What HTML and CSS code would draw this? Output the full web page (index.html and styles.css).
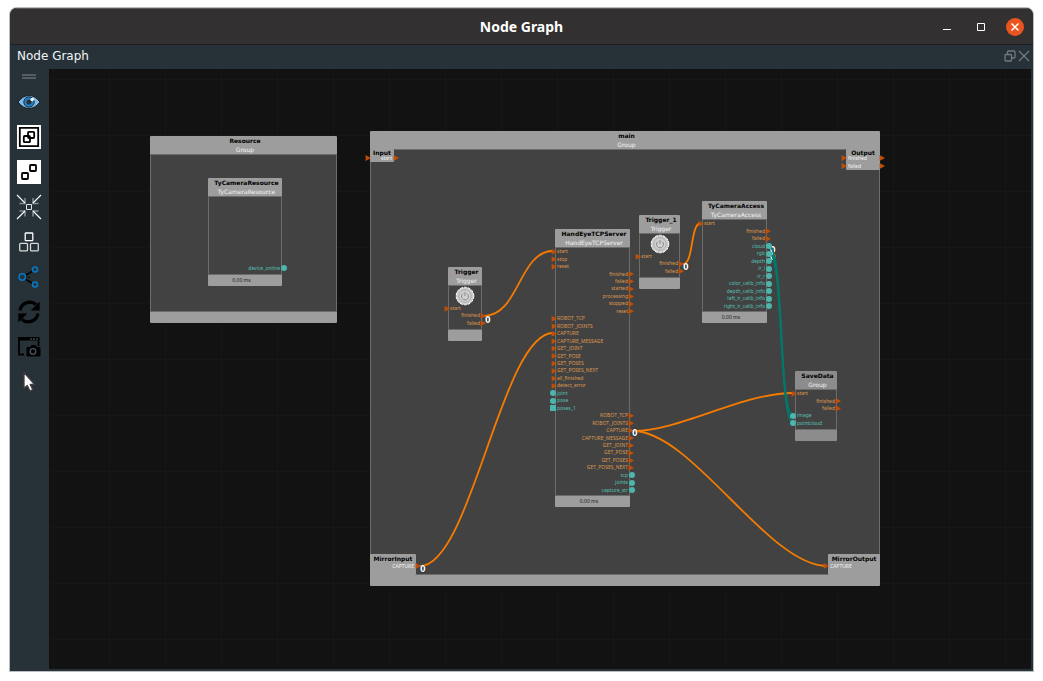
FILE: index.html
```html
<!DOCTYPE html>
<html lang="en">
<head>
<meta charset="utf-8">
<title>Node Graph</title>
<link rel="stylesheet" href="styles.css">
</head>
<body>
<div class="window">
  <header class="titlebar">
    <h1 class="titlebar-text">Node Graph</h1>
    <div class="controls">
      <button class="control" aria-label="Minimize"><svg width="18" height="18" viewBox="0 0 18 18"><path d="M5 11.500h8" stroke="#fff"/></svg></button>
      <button class="control" aria-label="Maximize"><svg width="18" height="18" viewBox="0 0 18 18"><path d="M5.500 5.500h7v7h-7z" fill="none" stroke="#fff"/></svg></button>
      <button class="control close" aria-label="Close"><svg width="18" height="18" viewBox="0 0 18 18"><path d="M5.500 5.500l7 7m0-7l-7 7" stroke="#fff" stroke-width="1.500"/></svg></button>
    </div>
  </header>
  <div class="dockbar">
    <h2 class="dock-title">Node Graph</h2>
    <div class="dock-controls">
      <button class="dock-button" aria-label="Float"><svg width="12" height="12" viewBox="0 0 12 12" fill="none" stroke="#747a7d" stroke-width="1.300"><rect x="3.500" y="1" width="7.500" height="7" rx="1"/><rect x="1" y="4.500" width="6.500" height="6.500" rx="1" fill="#263238"/></svg></button>
      <button class="dock-button" aria-label="Close panel"><svg width="12" height="12" viewBox="0 0 12 12"><path d="M1 1l10 10M11 1L1 11" stroke="#747a7d" stroke-width="1.300"/></svg></button>
    </div>
  </div>
  <div class="workspace">
    <nav class="toolbar" aria-label="Graph tools">
      <div class="handle"></div>
      <button class="tool" aria-label="Show"><svg width="24" height="24" viewBox="0 0 24 24"><path d="M1 12Q6 5.500 12 5.500T23 12Q18 18.500 12 18.500T1 12z" fill="#83b9e4" stroke="#18232a"/><circle cx="12" cy="12" r="5.200" fill="#2382c6" stroke="#14324a"/><circle cx="12" cy="12" r="2.600" fill="#263238"/><circle cx="15.200" cy="9.500" r="1.700" fill="#fff"/></svg></button>
      <button class="tool" aria-label="Group"><svg width="24" height="24" viewBox="0 0 24 24" fill="none" stroke="#000"><path d="M0 0h24v24H0z" fill="#fff" stroke="none"/><path d="M2.800 2.800h18.400v18.400H2.800z" stroke-width="1.800"/><rect x="11" y="6.800" width="6.200" height="6.200" rx="1" stroke-width="1.800"/><rect x="6.800" y="11" width="6.200" height="6.200" rx="1" stroke-width="1.800"/></svg></button>
      <button class="tool" aria-label="Ungroup"><svg width="24" height="24" viewBox="0 0 24 24" fill="none" stroke="#000" stroke-width="1.800"><path d="M0 0h24v24H0z" fill="#fff" stroke="none"/><rect x="13" y="5" width="6" height="6" rx=".8"/><rect x="5" y="13" width="6" height="6" rx=".8"/></svg></button>
      <button class="tool" aria-label="Fit to view"><svg width="24" height="24" viewBox="0 0 24 24" fill="none"><path d="M2.500 8.500h5.500V3M21.500 8.500H16V3M2.500 16H8v5.500M21.500 16H16v5.500" stroke="#849096" stroke-width="1.500"/><path d="M0 0l8 8M24 0l-8 8M0 24l8-8M24 24l-8-8" stroke="#fff" stroke-width="1.100"/><path d="M9.500 9.500h5v5h-5z" stroke="#e3e6e7"/></svg></button>
      <button class="tool" aria-label="Arrange nodes"><svg width="24" height="24" viewBox="0 0 24 24" fill="none" stroke="#d8dbd8" stroke-width="1.300"><rect x="8.200" y="3" width="7.600" height="7.600" rx=".7" stroke="#fff"/><rect x="2.700" y="13.300" width="7.800" height="7.600" rx="1"/><rect x="13.500" y="13.300" width="7.800" height="7.600" rx="1"/></svg></button>
      <button class="tool" aria-label="Connections"><svg width="24" height="24" viewBox="0 0 24 24" fill="none"><path d="M8 10.500l8-4.500M8 14l8 4.500" stroke="#000" stroke-width="1.500"/><path d="M9 12.200h5" stroke="#000" stroke-dasharray="1.500 1"/><g stroke="#0878c8" stroke-width="1.500"><circle cx="5.300" cy="12" r="3.200"/><circle cx="18" cy="4.500" r="2.500"/><circle cx="18" cy="19.500" r="2.500"/></g></svg></button>
      <button class="tool" aria-label="Refresh"><svg width="24" height="24" viewBox="0 0 24 24"><path d="M3 10.500C4.500 1.500 15 .5 19 4.700" fill="none" stroke="#000" stroke-width="3.200"/><path d="M22.700 1.500v9h-9z"/><path d="M21 13.500C19.500 22.500 9 23.500 5 19.300" fill="none" stroke="#000" stroke-width="3.200"/><path d="M1.300 22.500v-9h9z"/></svg></button>
      <button class="tool" aria-label="Screenshot"><svg width="24" height="24" viewBox="0 0 24 24"><path d="M7 19.500H2V3.500h19.500V11" fill="none" stroke="#000" stroke-width="1.800"/><path d="M1.500 2.500h20.500v2.500h-20.500zM10 12.500h3l1.500-2h4l1.500 2h3V21H10z" stroke="#000" stroke-linejoin="round"/><path d="M13 4h8" stroke="#5b666b" stroke-dasharray="2 1"/><circle cx="16" cy="16.500" r="2.800" fill="none" stroke="#4a565c" stroke-width="1.300"/></svg></button>
      <button class="tool" aria-label="Select"><svg width="24" height="24" viewBox="0 0 24 24"><path d="M7 2.500v15.800l3.300-2.800 2.700 5.500 2.800-1.300-2.600-5.200h4.500z" fill="#fff" stroke="#443e3e" stroke-width="1.300" stroke-linejoin="round"/></svg></button>
    </nav>
    <main class="canvas">
      <section class="node resource"><header class="node-head"><b>Resource</b><span>Group</span></header><div class="node-body"></div><footer class="node-foot"></footer></section>
      <section class="node camera-resource"><header class="node-head"><b>TyCameraResource</b><span>TyCameraResource</span></header><div class="node-body"><ul class="ports"><li class="port out data">device_online</li></ul></div><footer class="node-foot">0.00 ms</footer></section>
      <section class="node main-group"><header class="node-head"><b>main</b><span>Group</span></header><div class="node-body"></div><footer class="node-foot"></footer></section>

      <span class="count cloud-count">0</span>
      <span class="count rgb-count">0</span>
      <svg class="edges" width="982" height="600" viewBox="49 69 982 600" fill="none">
        <g stroke="#f57c00" stroke-width="1.800">
          <path d="M484 316C519 316 519 251 553 251"/>
          <path d="M683 264C694 264 690 223 701 223"/>
          <path d="M420 566C471 566 502 333 553 333"/>
          <path d="M633 431C680 431 742 393 793 393"/>
          <path d="M633 431C692 431 768 566 827 566"/>
        </g>
        <g stroke="#00796b" stroke-width="2">
          <path d="M769 246C784 246 779 423 793 423"/>
          <path d="M769 253C784 253 778 415 793 415"/>
        </g>
      </svg>

      <section class="node bare input"><header class="node-head"><b>Input</b></header><ul class="ports"><li class="port both end flow">start</li></ul></section>
      <section class="node bare output"><header class="node-head"><b>Output</b></header><ul class="ports"><li class="port both flow">finished</li><li class="port both flow">failed</li></ul></section>
      <section class="node trigger"><header class="node-head"><b>Trigger</b><span>Trigger</span></header><div class="node-body">
        <button class="power" aria-label="Fire Trigger"><svg width="20" height="20" viewBox="0 0 20 20" fill="none"><circle cx="10" cy="10" r="8.800" fill="#d0d0d0" stroke="#fff" stroke-dasharray="3 1"/><circle cx="10" cy="10" r="6.300" stroke="#aaa"/><path d="M8 7.500a3.500 3.500 0 1 0 4 0M10 6v4" stroke="#8a8a8a"/></svg></button>
        <ul class="ports"><li class="port in flow">start</li><li class="port out flow">finished</li><li class="port out flow">failed</li></ul></div><footer class="node-foot"></footer></section>
      <section class="node trigger-one"><header class="node-head"><b>Trigger_1</b><span>Trigger</span></header><div class="node-body">
        <button class="power" aria-label="Fire Trigger_1"><svg width="20" height="20" viewBox="0 0 20 20" fill="none"><circle cx="10" cy="10" r="8.800" fill="#d0d0d0" stroke="#fff" stroke-dasharray="3 1"/><circle cx="10" cy="10" r="6.300" stroke="#aaa"/><path d="M8 7.500a3.500 3.500 0 1 0 4 0M10 6v4" stroke="#8a8a8a"/></svg></button>
        <ul class="ports"><li class="port in flow">start</li><li class="port out flow">finished</li><li class="port out flow">failed</li></ul></div><footer class="node-foot"></footer></section>
      <section class="node tall server"><header class="node-head"><b>HandEyeTCPServer</b><span>HandEyeTCPServer</span></header><div class="node-body"><ul class="ports">
        <li class="port in flow">start</li><li class="port in flow">stop</li><li class="port in flow">reset</li>
        <li class="port out flow">finished</li><li class="port out flow">failed</li><li class="port out flow">started</li><li class="port out flow">processing</li><li class="port out flow">stopped</li><li class="port out flow">reset</li>
        <li class="port in flow">ROBOT_TCP</li><li class="port in flow">ROBOT_JOINTS</li><li class="port in flow">CAPTURE</li><li class="port in flow">CAPTURE_MESSAGE</li><li class="port in flow">GET_JOINT</li><li class="port in flow">GET_POSE</li><li class="port in flow">GET_POSES</li><li class="port in flow">GET_POSES_NEXT</li><li class="port in flow">all_finished</li><li class="port in flow">detect_error</li>
        <li class="port in data">joint</li><li class="port in data">pose</li><li class="port in data list">poses_1</li>
        <li class="port out flow">ROBOT_TCP</li><li class="port out flow">ROBOT_JOINTS</li><li class="port out flow">CAPTURE</li><li class="port out flow">CAPTURE_MESSAGE</li><li class="port out flow">GET_JOINT</li><li class="port out flow">GET_POSE</li><li class="port out flow">GET_POSES</li><li class="port out flow">GET_POSES_NEXT</li>
        <li class="port out data">tcp</li><li class="port out data">joints</li><li class="port out data">capture_str</li>
      </ul></div><footer class="node-foot">0.00 ms</footer></section>
      <section class="node tall camera-access"><header class="node-head"><b>TyCameraAccess</b><span>TyCameraAccess</span></header><div class="node-body"><ul class="ports">
        <li class="port in flow">start</li><li class="port out flow">finished</li><li class="port out flow">failed</li>
        <li class="port out data">cloud</li><li class="port out data">rgb</li><li class="port out data">depth</li><li class="port out data">ir_l</li><li class="port out data">ir_r</li><li class="port out data">color_calib_info</li><li class="port out data">depth_calib_info</li><li class="port out data">left_ir_calib_info</li><li class="port out data">right_ir_calib_info</li>
      </ul></div><footer class="node-foot">0.00 ms</footer></section>
      <section class="node dim save-data"><header class="node-head"><b>SaveData</b><span>Group</span></header><div class="node-body"><ul class="ports">
        <li class="port in flow">start</li><li class="port out flow">finished</li><li class="port out flow">failed</li><li class="port in data">image</li><li class="port in data">pointcloud</li>
      </ul></div><footer class="node-foot"></footer></section>
      <section class="node bare mirror mirror-input"><header class="node-head"><b>MirrorInput</b></header><ul class="ports"><li class="port out flow">CAPTURE</li></ul></section>
      <section class="node bare mirror mirror-output"><header class="node-head"><b>MirrorOutput</b></header><ul class="ports"><li class="port in flow">CAPTURE</li></ul></section>

      <span class="count trigger-count">0</span>
      <span class="count trigger-one-count">0</span>
      <span class="count capture-count">0</span>
      <span class="count mirror-count">0</span>
    </main>
  </div>
</div>
</body>
</html>
```

FILE: styles.css
```css
* { box-sizing: border-box; }

body {
  margin: 0;
  height: 100vh;
  padding: 8px 10px 10px;
  background: #fff;
  font-family: "DejaVu Sans", sans-serif;
}

h1, h2, ul { margin: 0; padding: 0; }

button {
  display: grid;
  place-items: center;
  padding: 0;
  border: 0;
  background: none;
}

svg { display: block; }

/* Window frame */
.window {
  display: flex;
  flex-direction: column;
  height: 100%;
  overflow: hidden;
  border-radius: 7px 7px 0 0;
  background: #263238;
  box-shadow: 0 0 0 1px #b9bdc0;
}

.titlebar {
  display: grid;
  grid-template-columns: 1fr auto 1fr;
  align-items: center;
  flex: none;
  height: 37px;
  padding: 0 9px;
  background: #323030;
  border-top: 1px solid #5a5858;
  border-bottom: 1px solid #1f1d1d;
}

.titlebar-text {
  grid-column: 2;
  color: #fff;
  font: bold 14px/20px "Noto Sans", sans-serif;
}

.controls {
  display: flex;
  justify-content: flex-end;
  gap: 16px;
}

.control { width: 18px; height: 18px; border-radius: 50%; }
.close { background: #e95420; }

.dockbar {
  display: flex;
  align-items: center;
  justify-content: space-between;
  flex: none;
  height: 24px;
  padding: 0 3px 2px 7px;
}

.dock-title {
  color: #f2f4f5;
  font-size: 12px;
  font-weight: normal;
  line-height: 20px;
}

.dock-controls { display: flex; gap: 2px; }

.workspace {
  display: flex;
  flex: 1;
  min-height: 0;
  padding: 0 2px 2px 0;
}

/* Toolbar */
.toolbar {
  display: flex;
  flex-direction: column;
  align-items: center;
  flex: none;
  gap: 11px;
  width: 39px;
  padding: 5px 1px 0 0;
}

.handle {
  width: 14px;
  height: 5px;
  border: solid #555d61;
  border-width: 2px 0;
}

.tool { width: 24px; height: 24px; }
.tool svg { overflow: visible; }

/* Graph canvas */
.canvas {
  position: relative;
  flex: 1;
  overflow: hidden;
  background-color: #121212;
  background-image:
    linear-gradient(90deg, #161616 1px, transparent 1px),
    linear-gradient(#161616 1px, transparent 1px);
  background-size: 56px 56px;
  background-position: 4px 10px;
}

.edges { position: absolute; left: 0; top: 0; }

.node {
  position: absolute;
  display: flex;
  flex-direction: column;
  border-radius: 1px;
  background: #9d9d9d;
  font-size: 6px;
}

.node-head {
  display: flex;
  flex-direction: column;
  align-items: center;
  flex: none;
  height: 18px;
  padding-left: 3px;
  line-height: 9px;
  white-space: nowrap;
}

.node-head b { color: #000; }
.node-head span { color: #f4f4f4; }

.node-body {
  display: flex;
  flex-direction: column;
  flex: 1;
  padding-bottom: 2px;
  border: 1px solid #6c6c6c;
  background: #424242;
}

.node-foot {
  flex: none;
  height: 11px;
  padding-right: 7px;
  color: #222;
  font: 5px/10px "Noto Sans", sans-serif;
  text-align: center;
}

.dim { background: #8c8c8c; }

.resource { left: 101px; top: 67px; width: 187px; height: 187px; }
.camera-resource { left: 159px; top: 109px; width: 74px; height: 108px; }
.main-group { left: 321px; top: 62px; width: 510px; height: 455px; }
.input { left: 321px; top: 80px; width: 24px; height: 13px; }
.output { left: 797px; top: 80px; width: 34px; height: 21px; }
.trigger { left: 399px; top: 198px; width: 34px; height: 74px; }
.trigger-one { left: 590px; top: 146px; width: 41px; height: 74px; }
.server { left: 506px; top: 160px; width: 75px; height: 278px; }
.camera-access { left: 653px; top: 132px; width: 65px; height: 122px; }
.save-data { left: 746px; top: 302px; width: 42px; height: 70px; }
.mirror-input { left: 321px; top: 485px; width: 46px; height: 21px; }
.mirror-output { left: 779px; top: 485px; width: 52px; height: 21px; }

.tall .node-body { padding-bottom: 1px; }

.power { flex: none; height: 19px; }

/* Ports */
.ports {
  display: flex;
  flex-direction: column;
  flex: 1;
  list-style: none;
  font: 5px/7px "Noto Sans", sans-serif;
}

.port {
  display: flex;
  align-items: center;
  flex: 1;
  white-space: nowrap;
}

.camera-resource .ports { justify-content: flex-end; }
.camera-resource .port { flex: none; height: 8px; }

.port::before,
.both::after {
  content: "";
  flex: none;
  width: 6px;
  height: 6px;
}

.flow { color: #dc9850; }
.data { gap: 1px; color: #55c0b5; }
.in { margin-left: -5px; }
.out { flex-direction: row-reverse; margin-right: -5px; }
.in.data { margin-left: -6px; }
.out.data { margin-right: -6px; }

.flow::before,
.both::after {
  background: #bf4f06;
  clip-path: polygon(10% 0, 100% 50%, 10% 100%);
}

.data::before { border-radius: 50%; background: #4db6ac; }
.list::before { border-radius: 0; }

/* Group terminals */
.bare .node-head { height: 5px; padding: 0; line-height: 8px; }
.bare .ports { flex: none; }
.bare .port { gap: 1px; height: 8px; flex: none; color: #f4f4f4; }
.mirror .node-head { height: 8px; line-height: 10px; }
.both { margin: 0 -5px; }
.both::after { margin-left: auto; }
.end::before { margin-right: auto; }
.end::after { margin-left: 0; }

/* Connection counters */
.count {
  position: absolute;
  color: #fff;
  font-size: 8px;
  font-weight: bold;
  line-height: 8px;
  text-shadow: 0 0 1px #000;
}

.trigger-count { left: 436px; top: 248px; }
.trigger-one-count { left: 634px; top: 195px; }
.capture-count { left: 583px; top: 361px; }
.mirror-count { left: 371px; top: 497px; }
.cloud-count { left: 721px; top: 178px; }
.rgb-count { left: 721px; top: 185px; }
```
